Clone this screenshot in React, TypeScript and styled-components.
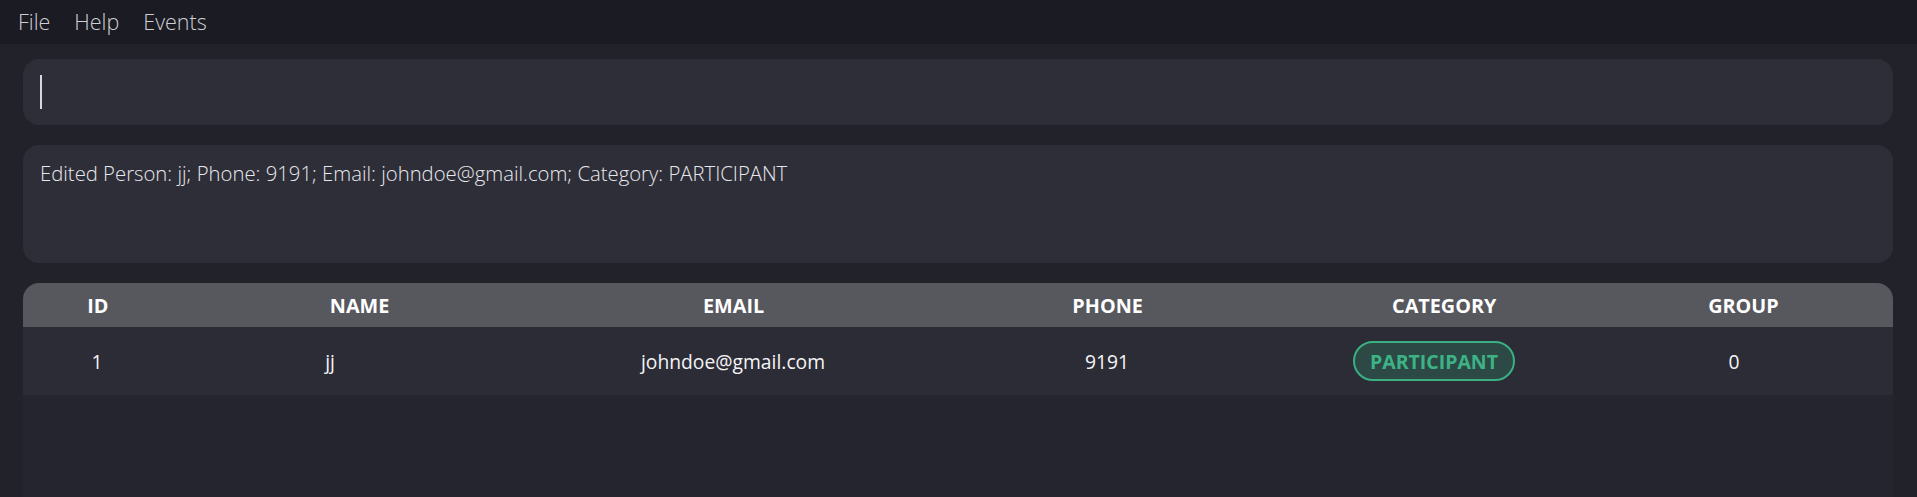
import React from "react";
import styled, { createGlobalStyle } from "styled-components";

const Global = createGlobalStyle`
  html, body { margin: 0; padding: 0; background: #22222b; }
  body { font-family: "Open Sans", "Noto Sans", sans-serif; overflow: hidden; }
  #root { min-height: 497px; }
`;

const Page = styled.div`
  display: flex;
  flex-direction: column;
  height: 497px;
  background: #22222b;
`;

const MenuBar = styled.nav`
  display: flex;
  align-items: center;
  gap: 24px;
  height: 44px;
  padding: 0 18px;
  background: #1b1b23;
  flex-shrink: 0;
`;

const MenuItem = styled.span`
  font-size: 21.5px;
  font-weight: 300;
  color: #cfcfd4;
  line-height: 1;
`;

const Main = styled.main`
  flex: 1;
  display: flex;
  flex-direction: column;
  gap: 20px;
  padding: 15px 24px 0 23px;
  min-height: 0;
`;

const CommandBox = styled.div`
  height: 66px;
  border-radius: 16px;
  background: #2e2e38;
  display: flex;
  align-items: center;
  padding: 0 17px;
  flex-shrink: 0;
`;

const Caret = styled.span`
  display: block;
  width: 2px;
  height: 34px;
  background: #d8d8dc;
`;

const ResultBox = styled.div`
  height: 118px;
  border-radius: 16px;
  background: #2e2e38;
  padding: 15px 17px;
  box-sizing: border-box;
  flex-shrink: 0;
  font-size: 20.3px;
  font-weight: 300;
  color: #e8e8ec;
  line-height: 1.3;
`;

const Table = styled.div`
  flex: 1;
  display: flex;
  flex-direction: column;
  border-radius: 16px 16px 0 0;
  overflow: hidden;
  background: #24252f;
`;

const HeaderRow = styled.div`
  display: grid;
  grid-template-columns: 8fr 20fr 20fr 20fr 16fr 16fr;
  align-items: center;
  height: 44px;
  background: #57585e;
  flex-shrink: 0;
`;

const BodyRow = styled.div`
  display: grid;
  grid-template-columns: 148px 318px 488px 260px 394px 206px;
  align-items: center;
  height: 68px;
  padding-right: 56px;
  background: #2c2c36;
  flex-shrink: 0;
`;

const HeadCell = styled.div`
  text-align: center;
  font-size: 19.8px;
  font-weight: 700;
  color: #ffffff;
`;

const Cell = styled.div`
  text-align: center;
  font-size: 19.3px;
  font-weight: 400;
  color: #f4f4f6;
  display: flex;
  justify-content: center;
`;

const Pill = styled.span`
  display: inline-flex;
  align-items: center;
  justify-content: center;
  height: 40px;
  padding: 0 15px;
  box-sizing: border-box;
  border: 2px solid #3aaf82;
  border-radius: 20px;
  background: #2c4945;
  color: #3db385;
  font-weight: 700;
  font-size: 19.5px;
`;

const headers = ["ID", "NAME", "EMAIL", "PHONE", "CATEGORY", "GROUP"];

export default function App() {
  return (
    <Page>
      <Global />
      <MenuBar>
        <MenuItem>File</MenuItem>
        <MenuItem>Help</MenuItem>
        <MenuItem>Events</MenuItem>
      </MenuBar>
      <Main>
        <CommandBox>
          <Caret />
        </CommandBox>
        <ResultBox>
          Edited Person: jj; Phone: 9191; Email: johndoe@gmail.com; Category: PARTICIPANT
        </ResultBox>
        <Table>
          <HeaderRow>
            {headers.map((h) => (
              <HeadCell key={h}>{h}</HeadCell>
            ))}
          </HeaderRow>
          <BodyRow>
            <Cell>1</Cell>
            <Cell>jj</Cell>
            <Cell>johndoe@gmail.com</Cell>
            <Cell>9191</Cell>
            <Cell>
              <Pill>PARTICIPANT</Pill>
            </Cell>
            <Cell>0</Cell>
          </BodyRow>
        </Table>
      </Main>
    </Page>
  );
}
